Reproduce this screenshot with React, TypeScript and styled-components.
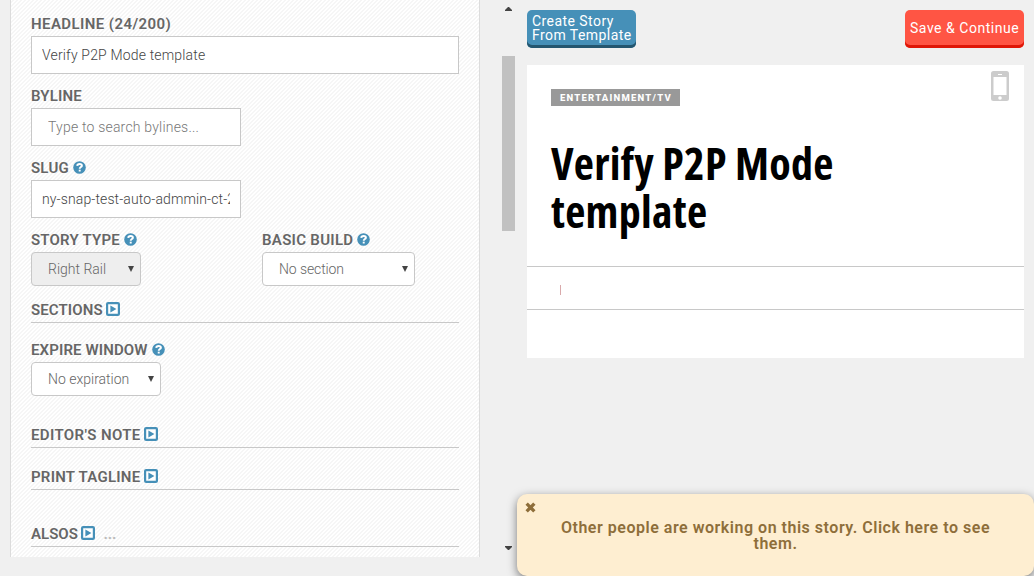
import React from "react";
import styled, { createGlobalStyle, css } from "styled-components";

const Global = createGlobalStyle`
  * { box-sizing: border-box; }
  body {
    margin: 0;
    background: #f0f0f0;
    font-family: Roboto, "Liberation Sans", sans-serif;
    overflow: hidden;
  }
`;

const Page = styled.div`
  display: flex;
  width: 1034px;
  height: 576px;
  padding-left: 10px;
  position: relative;
`;

const FormPanel = styled.main`
  width: 470px;
  height: 557px;
  padding: 12px 20px 0;
  border: solid #dcdcdc;
  border-width: 0 1px;
  background: repeating-linear-gradient(135deg, #fff 0 1.414px, #f6f6f6 1.414px 2.828px);
`;

const Field = styled.div<{ $mt?: number }>`
  margin-top: ${(p) => p.$mt ?? 0}px;
`;

const FieldRow = styled.div`
  display: grid;
  grid-template-columns: 231px 1fr;
  margin-top: 10px;
`;

const Label = styled.label<{ $ls?: number }>`
  display: flex;
  align-items: center;
  height: 24px;
  color: #666;
  font-size: 15px;
  font-weight: 600;
  white-space: pre;
  letter-spacing: ${(p) => p.$ls ?? 0.2}px;
  svg { margin: 0 0 1px 4px; flex: none; }
`;

const Section = styled(Label)<{ $mt: number }>`
  height: 25px;
  margin-top: ${(p) => p.$mt}px;
  border-bottom: 1px solid #c8c8c8;
  svg { margin: 0 0 2px 3.5px; }
`;

const Dots = styled.span`
  margin-left: 8px;
  color: #bbb;
  font-weight: 700;
`;

const Input = styled.input<{ $w: number; $pad?: number; $ls?: number }>`
  display: block;
  width: ${(p) => p.$w}px;
  height: 38px;
  padding: 0 10px 0 ${(p) => p.$pad ?? 10}px;
  border: 1px solid #c8c8c8;
  border-radius: 0;
  outline: none;
  background: #fff;
  color: #444;
  font: 300 14px Roboto, sans-serif;
  letter-spacing: ${(p) => p.$ls ?? 0.2}px;
  &::placeholder { color: #777; opacity: 1; }
`;

const SelectBox = styled.div<{ $w: number; $disabled?: boolean; $ls?: number }>`
  display: flex;
  align-items: center;
  justify-content: space-between;
  width: ${(p) => p.$w}px;
  height: 34px;
  padding: 0 6px 0 16px;
  border: 1px solid #c8c8c8;
  border-radius: 4px;
  background: ${(p) => (p.$disabled ? "#eee" : "#fff")};
  color: #666;
  font-size: 14px;
  font-weight: 300;
  letter-spacing: ${(p) => p.$ls ?? 0}px;
`;

const Gutter = styled.div`
  display: flex;
  flex-direction: column;
  align-items: center;
  width: 47px;
  padding: 7px 0 26px 10px;
  svg { display: block; }
`;

const Thumb = styled.div`
  width: 13px;
  height: 175px;
  margin: 45px 0 auto;
  background: #c1c1c1;
`;

const Preview = styled.section`
  width: 497px;
  padding-top: 10px;
`;

const Actions = styled.div`
  display: flex;
  justify-content: space-between;
`;

const buttonTone = {
  blue: css`
    background: #4690b8;
    box-shadow: inset 0 -3px #24566f;
  `,
  red: css`
    background: #ff5544;
    box-shadow: inset 0 -3px #df1708;
  `,
};

const Button = styled.button<{ $tone: "blue" | "red"; $w: number; $ls: number }>`
  width: ${(p) => p.$w}px;
  height: 38px;
  padding: 0 0 2px 5px;
  border: 0;
  border-radius: 5px;
  color: #fff;
  font: 400 14px/14px Roboto, sans-serif;
  letter-spacing: ${(p) => p.$ls}px;
  text-align: left;
  white-space: nowrap;
  ${(p) => buttonTone[p.$tone]}
`;

const Story = styled.article`
  height: 293px;
  margin-top: 17px;
  background: #fff;
`;

const StoryHead = styled.header`
  display: flex;
  justify-content: space-between;
  align-items: flex-start;
  height: 202px;
  padding: 6px 15px 0 24px;
  border-bottom: 1px solid #c8c8c8;
`;

const Tag = styled.span`
  display: block;
  width: 129px;
  height: 17px;
  margin-top: 18px;
  padding-left: 9px;
  background: #999;
  color: #fff;
  font-size: 9.5px;
  font-weight: 800;
  line-height: 17px;
  letter-spacing: 1.23px;
  white-space: nowrap;
`;

const Title = styled.h1`
  width: 340px;
  margin: 33px 0 0;
  color: #000;
  font: 700 44px/48px "Open Sans", sans-serif;
  font-stretch: 75%;
  letter-spacing: 0.28px;
`;

const Byline = styled.div`
  display: flex;
  align-items: center;
  height: 43px;
  padding: 4px 0 0 33px;
  border-bottom: 1px solid #c8c8c8;
`;

const Caret = styled.span`
  width: 1px;
  height: 10px;
  background: #d9a9ab;
`;

const Notice = styled.aside`
  position: absolute;
  left: 517px;
  top: 494px;
  width: 517px;
  height: 82px;
  padding: 26px 40px 0;
  border-radius: 10px;
  background: #feeed1;
  box-shadow: 0 3px 10px rgba(0, 0, 0, 0.5);
  color: #8e6e3a;
  font-size: 16px;
  font-weight: 600;
  line-height: 16px;
  letter-spacing: 0.52px;
  text-align: center;
`;

const Close = styled.svg`
  position: absolute;
  left: 8px;
  top: 8px;
`;

const Help = () => (
  <svg width="13" height="13" viewBox="0 0 12 12">
    <circle cx="6" cy="6" r="5.8" fill="#4690b8" />
    <path d="M3.9 4.5C4 3.2 4.9 2.7 6.1 2.7c1.3 0 2.1.7 2.1 1.6C8.2 5.6 6.2 5.6 6.2 7.1" fill="none" stroke="#fff" strokeWidth="1.8" />
    <rect x="5.3" y="8" width="1.8" height="1.7" fill="#fff" />
  </svg>
);

const Expand = () => (
  <svg width="14" height="14" viewBox="0 0 14 14">
    <rect x="1.1" y="1.1" width="11.8" height="11.8" rx="1" fill="#fff" stroke="#4690b8" strokeWidth="2.2" />
    <path d="M4.4 3.5v7L10.4 7z" fill="#4690b8" />
  </svg>
);

const Down = () => (
  <svg width="6" height="6" viewBox="0 0 6 6">
    <path d="M0 0h6L3 6z" fill="#444" />
  </svg>
);

export default function App() {
  return (
    <>
      <Global />
      <Page>
        <FormPanel>
          <Field>
            <Label $ls={0.42}>HEADLINE (24/200)</Label>
            <Input $w={428} $ls={0.17} defaultValue="Verify P2P Mode template" />
          </Field>
          <Field $mt={10}>
            <Label>BYLINE</Label>
            <Input $w={210} $pad={16} placeholder="Type to search bylines..." />
          </Field>
          <Field $mt={10}>
            <Label>SLUG<Help /></Label>
            <Input $w={210} $ls={0.12} defaultValue="ny-snap-test-auto-admmin-ct-20160101" />
          </Field>
          <FieldRow>
            <Field>
              <Label>STORY TYPE<Help /></Label>
              <SelectBox $w={110} $disabled>Right Rail<Down /></SelectBox>
            </Field>
            <Field>
              <Label $ls={0.3}>BASIC BUILD<Help /></Label>
              <SelectBox $w={153} $ls={-0.1}>No section<Down /></SelectBox>
            </Field>
          </FieldRow>
          <Section $mt={12} $ls={0.1}>SECTIONS<Expand /></Section>
          <Field $mt={15}>
            <Label $ls={0.12}>EXPIRE WINDOW<Help /></Label>
            <SelectBox $w={130}>No expiration<Down /></SelectBox>
          </Field>
          <Section $mt={27} $ls={0.37}>EDITOR'S NOTE<Expand /></Section>
          <Section $mt={17} $ls={0.25}>PRINT TAGLINE<Expand /></Section>
          <Section $mt={32} $ls={0.02}>ALSOS<Expand /><Dots>...</Dots></Section>
        </FormPanel>
        <Gutter>
          <svg width="7" height="4" viewBox="0 0 7 4"><path d="M0 4V3L3 0h1l3 3v1z" fill="#444" /></svg>
          <Thumb />
          <svg width="7" height="4" viewBox="0 0 7 4"><path d="M0 0v1l3 3h1l3-3V0z" fill="#444" /></svg>
        </Gutter>
        <Preview>
          <Actions>
            <Button $tone="blue" $w={109} $ls={0.44}>Create Story<br />From Template</Button>
            <Button $tone="red" $w={119} $ls={0.53}>Save &amp; Continue</Button>
          </Actions>
          <Story>
            <StoryHead>
              <div>
                <Tag>ENTERTAINMENT/TV</Tag>
                <Title>Verify P2P Mode template</Title>
              </div>
              <svg width="18" height="30" viewBox="0 0 18 30">
                <rect width="18" height="30" rx="2.5" fill="#ccc" />
                <rect x="2.5" y="6" width="13" height="18" fill="#fff" />
                <rect x="7" y="3" width="4" height="1" fill="#fff" />
                <circle cx="9" cy="27" r="1.8" fill="#fff" />
              </svg>
            </StoryHead>
            <Byline><Caret /></Byline>
          </Story>
        </Preview>
        <Notice>
          <Close width="11" height="11" viewBox="0 0 10 10">
            <path d="M1.5 1.5l7 7M8.5 1.5l-7 7" stroke="#8e6e3a" strokeWidth="3" />
          </Close>
          Other people are working on this story. Click here to see them.
        </Notice>
      </Page>
    </>
  );
}
